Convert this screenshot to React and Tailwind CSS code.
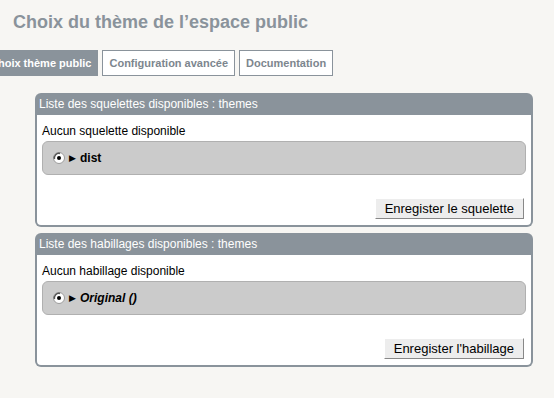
import React from "react";

const Radio = () => (
  <svg width="12" height="12" viewBox="0 0 12 12" className="shrink-0">
    <circle cx="6" cy="6" r="5.5" fill="#ffffff" stroke="#9a9a9a" />
    <path d="M1.5 7 A4.5 4.5 0 0 1 7 1.5" fill="none" stroke="#555" strokeWidth="1.5" />
    <circle cx="6" cy="6" r="2" fill="#000" />
  </svg>
);

const Panel = ({ title, empty, label, italic, button }) => (
  <div className="w-[498px]">
    <div className="h-[22px] rounded-t-[6px] bg-[#8a939b] px-[4px] flex items-center text-[12px] text-white">
      {title}
    </div>
    <div className="bg-white border-2 border-t-0 border-[#8a939b] rounded-b-[6px] px-[5px] pt-[8px] pb-[6px]">
      <div className="text-[12px] leading-[16px] text-black">{empty}</div>
      <div className="mt-[2px] h-[34px] rounded-[6px] bg-[#cbcbcb] border border-[#b0b0b0] flex items-center pl-[10px] gap-[4px]">
        <Radio />
        <span className="text-[9px] leading-none text-black">▶</span>
        <span className={`text-[12px] font-bold text-black ${italic ? "italic" : ""}`}>
          {label}
        </span>
      </div>
      <div className="flex justify-end mt-[23px] pr-[2px]">
        <button className="h-[21px] px-[9px] bg-[#ededed] border border-t-[#ffffff] border-l-[#ffffff] border-r-[#888] border-b-[#888] text-[13px] leading-none text-black">
          {button}
        </button>
      </div>
    </div>
  </div>
);

const App = () => {
  return (
    <div className="min-h-screen bg-[#f7f6f3] font-['Liberation_Sans',Arial,sans-serif] overflow-hidden">
      <h1 className="pl-[13px] pt-[11px] text-[18px] leading-[22px] font-bold text-[#8a939b]">
        Choix du thème de l’espace public
      </h1>
      <div className="flex gap-[4px] mt-[17px] -ml-[17px]">
        <div className="h-[26px] px-[6px] flex items-center bg-[#8a939b] border border-[#8a939b] text-[11px] font-bold text-white">
          Choix thème public
        </div>
        <div className="h-[26px] px-[6px] flex items-center bg-white border border-[#8a939b] text-[11px] font-bold text-[#7d868e]">
          Configuration avancée
        </div>
        <div className="h-[26px] px-[6px] flex items-center bg-white border border-[#8a939b] text-[11px] font-bold text-[#7d868e]">
          Documentation
        </div>
      </div>
      <div className="ml-[35px] mt-[17px] flex flex-col gap-[6px]">
        <Panel
          title="Liste des squelettes disponibles : themes"
          empty="Aucun squelette disponible"
          label="dist"
          button="Enregister le squelette"
        />
        <Panel
          title="Liste des habillages disponibles : themes"
          empty="Aucun habillage disponible"
          label="Original ()"
          italic
          button="Enregister l'habillage"
        />
      </div>
    </div>
  );
};

export default App;
